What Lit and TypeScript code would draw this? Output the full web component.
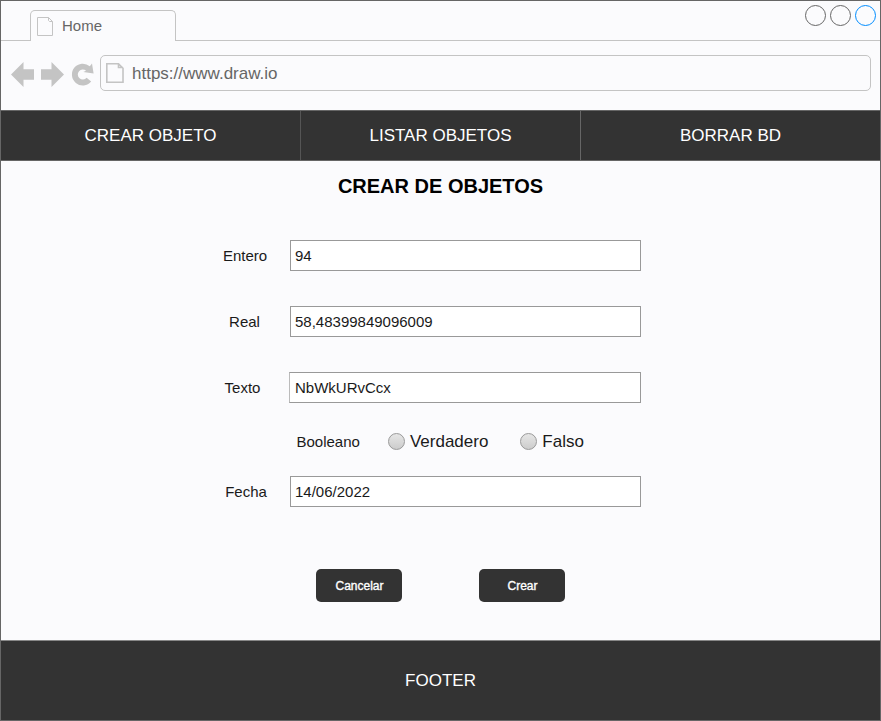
import { LitElement, html, css } from "lit";
import { customElement } from "lit/decorators.js";

@customElement("browser-bar")
class BrowserBar extends LitElement {
  static styles = css`
    :host { display: block; height: 109px; color: #666; }
    .strip { box-sizing: border-box; height: 40px; border-bottom: 1px solid #c4c4c4; display: flex; justify-content: space-between; align-items: flex-end; }
    .tab { box-sizing: border-box; width: 146px; height: 31px; margin: 0 0 -1px 29px; border: 1px solid #c4c4c4; border-bottom: 0; border-radius: 5px 5px 0 0; background: #fbfbfd; display: flex; align-items: center; font-size: 15px; padding: 1px 0 0 6px; gap: 8px; }
    .home { margin-top: -2px; }
    .page { display: block; }
    .circles { display: flex; align-self: flex-start; gap: 4px; padding: 4px 4px 0 0; }
    .circle { box-sizing: border-box; width: 21px; height: 21px; border: 1px solid #666; border-radius: 50%; }
    .active { border-color: #008cff; }
    .tools { display: flex; height: 36px; margin: 14px 9px 0 9px; }
    .nav { display: block; width: 90px; height: 36px; flex: none; }
    .url { box-sizing: border-box; flex: 1; border: 1px solid #c4c4c4; border-radius: 5px; display: flex; align-items: center; padding: 2px 0 0 5px; gap: 8px; font-size: 17px; }
    .url .page { margin-top: -2px; }
  `;
  render() {
    return html`
      <div class="strip">
        <div class="tab">
          <svg class="page" width="17" height="20" viewBox="0 0 17 20"><path d="M.5 .5H11.5L15.5 4.5V18.5H.5ZM11.5 .5V3.5L12.5 4.5H15.5" fill="none" stroke="#c4c4c4" /></svg>
          <span class="home">Home</span>
        </div>
        <div class="circles"><i class="circle"></i><i class="circle"></i><i class="circle active"></i></div>
      </div>
      <div class="tools">
        <svg class="nav" viewBox="10 55 90 36">
          <g fill="#c4c4c4">
            <path d="M11 74.5L23.5 62V69.3H34V79.7H23.5V87Z" />
            <path d="M64 74.5L51.5 62V69.3H41V79.7H51.5V87Z" />
            <path d="M92 63.5L93.6 73.6L83.3 72L86.1 70.7A5 5 0 1 0 86.6 77.7L91.2 81.5A10.9 10.9 0 1 1 89.8 66.2Z" />
          </g>
        </svg>
        <div class="url">
          <svg class="page" width="18" height="20" viewBox="0 0 18 20"><path d="M.8 .8H12.5L17 5.3V19.2H.8ZM12.5 .8V4.5H17" fill="none" stroke="#c4c4c4" stroke-width="1.6" /></svg>
          <span>https://www.draw.io</span>
        </div>
      </div>`;
  }
}

@customElement("app-root")
class AppRoot extends LitElement {
  static styles = css`
    :host { box-sizing: border-box; display: flex; flex-direction: column; width: 881px; height: 721px; border: 1px solid #666; background: #fbfbfd; color: #000; font-family: "Liberation Sans", Arial, sans-serif; overflow: hidden; }
    .menu { box-sizing: border-box; height: 51px; display: grid; grid-template-columns: 300px 280px 1fr; background: #333; border: 1px solid #666; border-left-color: #4d4d4d; color: #fff; font-size: 17px; margin: 0 -1px; }
    .item { display: flex; align-items: center; justify-content: center; border-right: 1px solid #666; }
    .item:first-child { border-color: #555; }
    .item:last-child { border: 0; }
    .title { margin: 0; height: 50px; line-height: 50px; font-size: 20px; text-align: center; }
    .form { height: 479px; flex: none; }
    .row { display: flex; align-items: center; height: 31px; margin-bottom: 35px; font-size: 15px; color: #1a1a1a; }
    .first { margin-top: 29px; }
    .label { width: 60px; margin-left: 214px; text-align: center; }
    .real { margin-left: 213px; width: 61px; }
    .texto { margin-left: 211px; width: 61px; }
    .fecha { margin-left: 215px; }
    .input { box-sizing: border-box; width: 351px; height: 31px; line-height: 29px; border: 1px solid #999; background: #fff; padding-left: 4px; margin-left: auto; margin-right: 239px; }
    .input.shift { width: 352px; padding-left: 5px; border-left-color: #bbb; }
    .bool { height: 22px; margin: -8px 0 24px 295.5px; }
    .choice { display: flex; align-items: center; gap: 5px; font-size: 17px; }
    .choice span { padding-top: 2px; }
    .yes { margin-left: 28px; }
    .no { margin-left: 32px; }
    .radio { box-sizing: border-box; width: 17px; height: 17px; border: 1px solid #999; border-radius: 50%; background: linear-gradient(#e6e6e6, #ccc); }
    .buttons { display: flex; gap: 77px; margin: 61.5px 0 0 315px; }
    .button { width: 86px; height: 33px; border: 0; padding: 2px 0 0 1px; border-radius: 5px; background: #333; color: #fff; font: 12px "Liberation Sans", Arial, sans-serif; -webkit-text-stroke: .35px #fff; }
    .footer { box-sizing: border-box; flex: 1; margin: 0 -1px -1px; border: 1px solid #555; border-top-color: #888; background: #333; color: #fff; display: flex; justify-content: center; align-items: center; font-size: 17px; }
  `;
  field(label: string, value: string, cls = "", shift = "") {
    return html`<div class="row"><span class="label ${cls}">${label}</span><span class="input ${shift}">${value}</span></div>`;
  }
  render() {
    return html`
      <browser-bar></browser-bar>
      <nav class="menu"><span class="item">CREAR OBJETO</span><span class="item">LISTAR OBJETOS</span><span class="item">BORRAR BD</span></nav>
      <main class="form">
        <h1 class="title">CREAR DE OBJETOS</h1>
        <div class="first">
          ${this.field("Entero", "94")}
          ${this.field("Real", "58,48399849096009", "real")}
          ${this.field("Texto", "NbWkURvCcx", "texto", "shift")}
          <div class="row bool"><span>Booleano</span>
            <span class="choice yes"><i class="radio"></i><span>Verdadero</span></span>
            <span class="choice no"><i class="radio"></i><span>Falso</span></span>
          </div>
          ${this.field("Fecha", "14/06/2022", "fecha")}
        </div>
        <div class="buttons"><button class="button">Cancelar</button><button class="button">Crear</button></div>
      </main>
      <footer class="footer">FOOTER</footer>
    `;
  }
}
